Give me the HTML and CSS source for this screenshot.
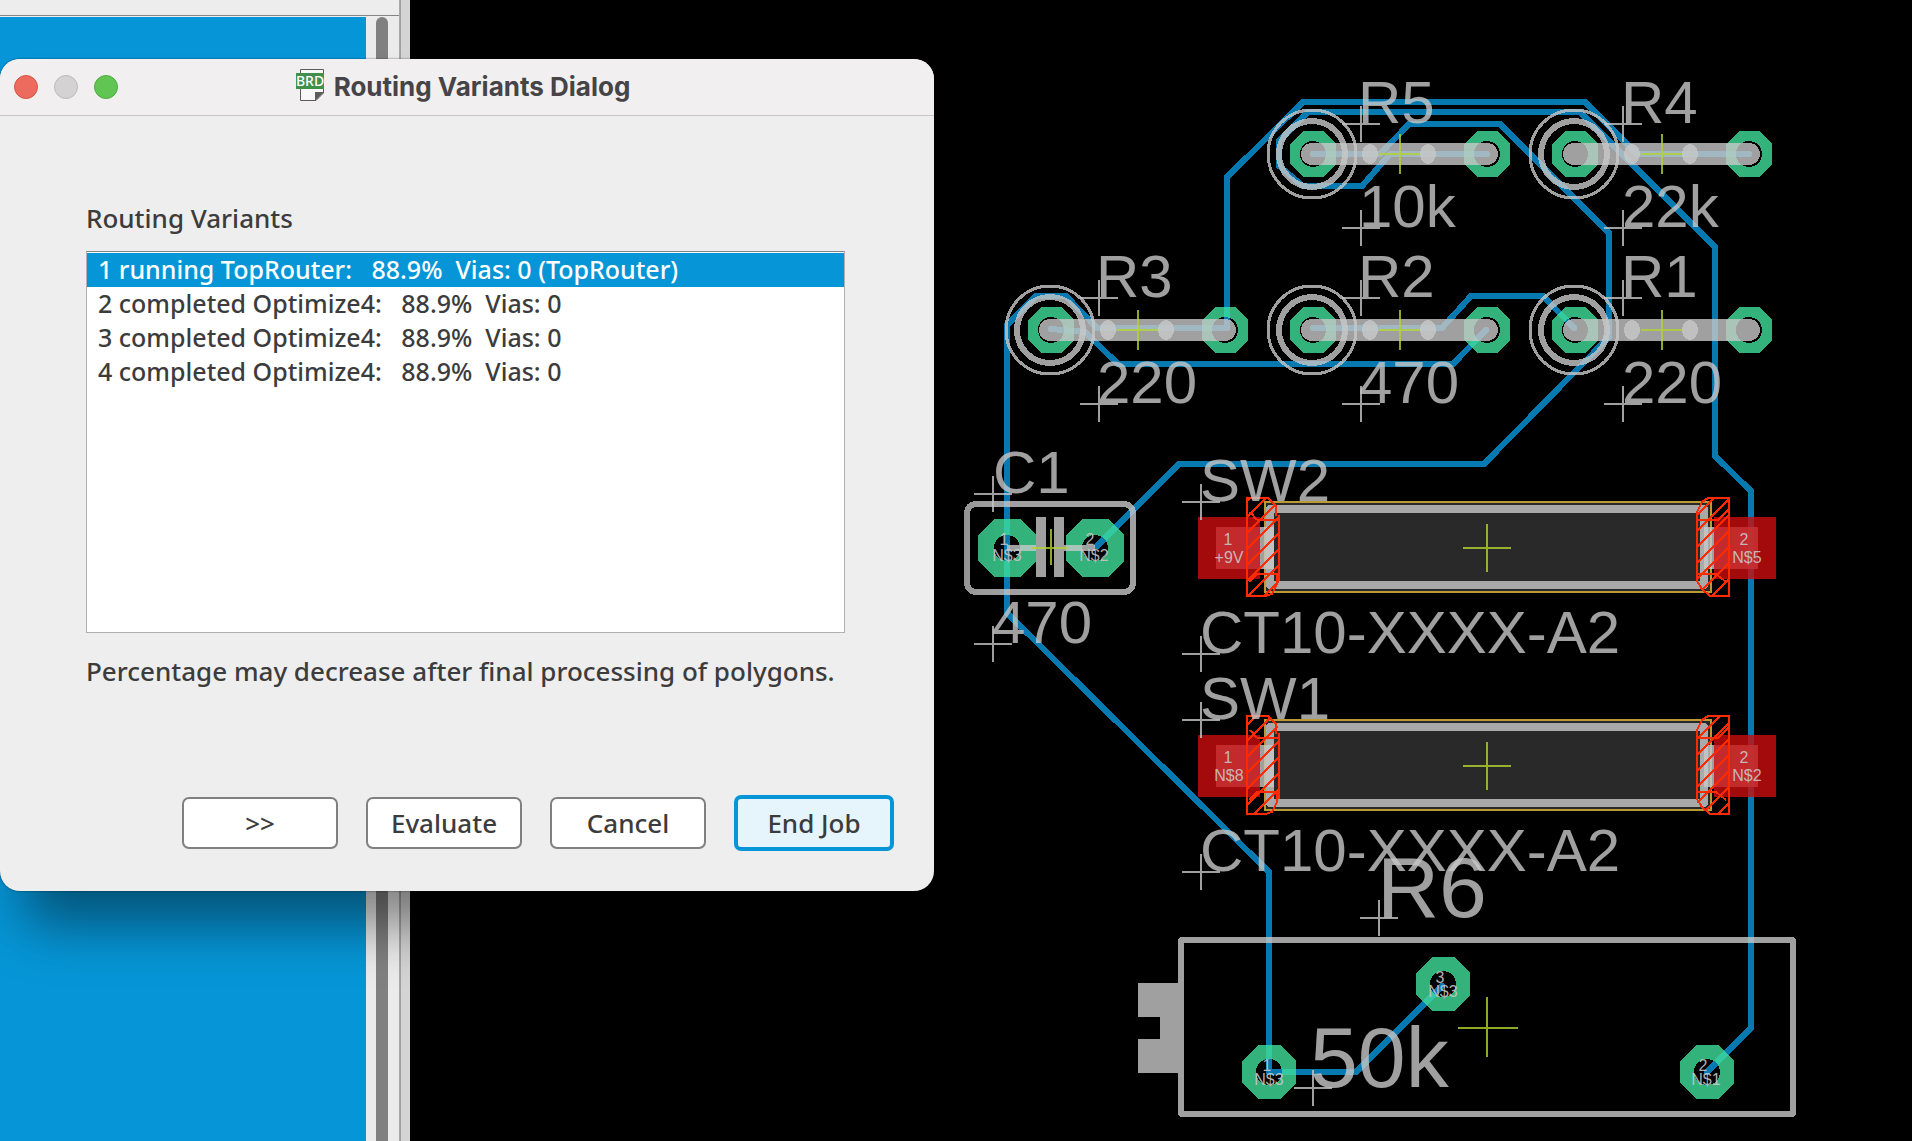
FILE: index.html
```html
<!DOCTYPE html>
<html lang="en">
<head>
<meta charset="utf-8">
<title>Routing Variants Dialog</title>
<link rel="stylesheet" href="styles.css">
</head>
<body>
<main class="workspace">
  <aside class="side">
    <div class="side-window">
      <div class="side-head"></div>
      <div class="side-view">
        <div class="side-selection"></div>
        <div class="track"><div class="thumb"></div></div>
      </div>
    </div>
    <div class="splitter"></div>
  </aside>
  <section class="canvas" aria-label="Board layout">
    <svg class="board" viewBox="410 0 1502 1141" preserveAspectRatio="xMinYMin meet">
      <defs>
        <pattern id="hatch" width="16" height="16" patternUnits="userSpaceOnUse">
          <path class="mask-line" d="M-2 6L6 -2M3 17L17 3"/>
        </pattern>
        <g id="origin"><path d="M-19 0H19M0 -18V18"/></g>
        <path id="pad-s" d="M-10 -23H10L23 -10V10L10 23H-10L-23 10V-10ZM13 0A13 13 0 1 0 -13 0A13 13 0 1 0 13 0Z"/>
        <path id="pad-m" d="M-11 -27H11L27 -11V11L11 27H-11L-27 11V-11ZM13 0A13 13 0 1 0 -13 0A13 13 0 1 0 13 0Z"/>
        <path id="pad-l" d="M-13 -29H13L29 -13V13L13 29H-13L-29 13V-13ZM13 0A13 13 0 1 0 -13 0A13 13 0 1 0 13 0Z"/>
        <g id="resistor">
          <circle class="ring-thin" r="44"/>
          <circle class="ring" r="33"/>
          <path class="lead" d="M0 0H175"/>
          <ellipse class="silk" cx="58" rx="8" ry="10"/>
          <ellipse class="silk" cx="116" rx="8" ry="10"/>
          <path class="center" d="M67 0H108M88 -20V20"/>
        </g>
        <g id="switch">
          <rect class="body" x="1265" y="502" width="446" height="90"/>
          <rect class="frame" x="1270" y="509" width="434" height="76"/>
          <path class="silk" d="M1216 527H1274V569H1216ZM1704 527H1758V569H1704Z"/>
          <path class="smd" d="M1198 517H1260V579H1198ZM1714 517H1776V579H1714Z"/>
          <path class="center" d="M1463 548H1511M1487 524V572"/>
        </g>
        <g id="switch-mask">
          <path class="mask-line" d="M1268 498H1247V596H1265L1272 594L1277 584V574M1268 498L1276 506V516M1279 515V581M1257 520H1279M1256 574H1279M1257 520L1250 512M1257 574L1249 582"/>
          <path class="mask-line" d="M1708 498H1729V596H1710L1702 589L1697 581V512L1702 502L1708 498M1697 520H1718L1728 510M1697 574H1716L1726 582"/>
        </g>
      </defs>

      <g class="traces">
        <path d="M1227 328V177L1303 102H1585L1637 154H1749"/>
        <path d="M1390 154L1362 186H1303L1279 166V141L1308 112H1580L1715 247V456L1751 491V1028L1707 1072"/>
        <path d="M1313 154H1380L1409 124H1500L1609 233V337L1484 464H1179L1097 546"/>
        <path d="M1392 154H1487"/>
        <path d="M1227 328H1097L1066 296H1036L1007 325V613L1269 872V1072H1356L1442 986"/>
        <path d="M1051 329L1085 332L1118 364H1453L1486 330"/>
        <path d="M1313 328H1442L1471 296H1543L1574 328"/>
      </g>

      <g class="pads">
        <use href="#pad-s" x="1313" y="154"/><use href="#pad-s" x="1487" y="154"/>
        <use href="#pad-s" x="1575" y="154"/><use href="#pad-s" x="1749" y="154"/>
        <use href="#pad-s" x="1051" y="330"/><use href="#pad-s" x="1225" y="330"/>
        <use href="#pad-s" x="1313" y="330"/><use href="#pad-s" x="1487" y="330"/>
        <use href="#pad-s" x="1575" y="330"/><use href="#pad-s" x="1749" y="330"/>
        <use href="#pad-l" x="1007" y="548"/><use href="#pad-l" x="1095" y="548"/>
        <use href="#pad-m" x="1269" y="1072"/><use href="#pad-m" x="1443" y="984"/>
        <use href="#pad-m" x="1707" y="1072"/>
      </g>

      <use href="#resistor" x="1312" y="154"/>
      <use href="#resistor" x="1574" y="154"/>
      <use href="#resistor" x="1050" y="330"/>
      <use href="#resistor" x="1312" y="330"/>
      <use href="#resistor" x="1574" y="330"/>

      <!-- capacitor C1 -->
      <rect class="ring" x="967" y="504" width="166" height="88" rx="9"/>
      <path class="silk" d="M1036 517H1046V577H1036ZM1054 517H1064V577H1054ZM1007 545H1036V551H1007ZM1064 545H1095V551H1064Z"/>
      <path class="center" d="M1032 548H1068M1051 529V565"/>

      <use href="#switch"/>
      <use href="#switch" y="218"/>
      <path fill="url(#hatch)" d="M1247 498H1268L1279 510V584L1268 596H1247ZM1729 498H1708L1697 510V584L1708 596H1729Z"/>
      <path fill="url(#hatch)" d="M1247 716H1268L1279 728V802L1268 814H1247ZM1729 716H1708L1697 728V802L1708 814H1729Z"/>
      <use href="#switch-mask"/>
      <use href="#switch-mask" y="218"/>

      <!-- trimmer R6 -->
      <rect class="ring" x="1181" y="940" width="612" height="174" rx="1"/>
      <path class="silk" d="M1138 983H1178V1073H1138V1039H1160V1017H1138Z"/>
      <path class="center" d="M1458 1028H1518M1487 997V1057"/>

      <g class="origins">
        <use href="#origin" x="1361" y="124"/><use href="#origin" x="1361" y="228"/>
        <use href="#origin" x="1623" y="124"/><use href="#origin" x="1623" y="228"/>
        <use href="#origin" x="1099" y="298"/><use href="#origin" x="1099" y="404"/>
        <use href="#origin" x="1361" y="298"/><use href="#origin" x="1361" y="404"/>
        <use href="#origin" x="1623" y="298"/><use href="#origin" x="1623" y="404"/>
        <use href="#origin" x="993" y="494"/><use href="#origin" x="993" y="644"/>
        <use href="#origin" x="1201" y="502"/><use href="#origin" x="1201" y="654"/>
        <use href="#origin" x="1201" y="720"/><use href="#origin" x="1201" y="872"/>
        <use href="#origin" x="1379" y="918"/><use href="#origin" x="1313" y="1088"/>
      </g>

      <g class="names">
        <text x="1358" y="123">R5</text><text x="1359" y="227">10k</text>
        <text x="1621" y="123">R4</text><text x="1622" y="227">22k</text>
        <text x="1096" y="297">R3</text><text x="1097" y="403">220</text>
        <text x="1358" y="297">R2</text><text x="1359" y="403">470</text>
        <text x="1621" y="297">R1</text><text x="1622" y="403">220</text>
        <text x="993" y="493">C1</text><text x="992" y="643">470</text>
        <text x="1200" y="501">SW2</text><text x="1200" y="653">CT10-XXXX-A2</text>
        <text x="1200" y="719">SW1</text><text x="1200" y="871">CT10-XXXX-A2</text>
      </g>
      <g class="names large">
        <text x="1377" y="917">R6</text><text x="1310" y="1087">50k</text>
      </g>
      <g class="nets">
        <text x="1004" y="545">1</text><text x="1007" y="561">N$3</text>
        <text x="1090" y="545">2</text><text x="1094" y="561">N$2</text>
        <text x="1228" y="545">1</text><text x="1229" y="563">+9V</text>
        <text x="1744" y="545">2</text><text x="1747" y="563">N$5</text>
        <text x="1228" y="763">1</text><text x="1229" y="781">N$8</text>
        <text x="1744" y="763">2</text><text x="1747" y="781">N$2</text>
        <text x="1440" y="983">3</text><text x="1443" y="997">N$3</text>
        <text x="1267" y="1071">1</text><text x="1269" y="1085">N$3</text>
        <text x="1703" y="1071">2</text><text x="1706" y="1085">N$1</text>
      </g>
    </svg>
  </section>

  <section class="dialog" role="dialog" aria-labelledby="dialog-title">
    <header class="titlebar">
      <div class="lights">
        <button class="light close" type="button" aria-label="Close"></button>
        <button class="light minimize" type="button" aria-label="Minimize" disabled></button>
        <button class="light maximize" type="button" aria-label="Zoom"></button>
      </div>
      <h1 class="title" id="dialog-title">
        <svg class="doc" width="28" height="32" viewBox="0 0 28 32" aria-hidden="true">
          <path d="M4.500 .5H27.500V24L20 31.500H4.500Z" fill="#f8f8f8" stroke="#5c5c5c"/>
          <path d="M19 32V23H28Z" fill="#5c5c5c"/>
          <rect y="4" width="28" height="16" fill="#41904a"/>
          <text class="doc-label" x="14" y="17">BRD</text>
        </svg>
        <span>Routing Variants Dialog</span>
      </h1>
    </header>
    <div class="content">
      <h2 class="label" id="list-label">Routing Variants</h2>
      <ul class="variants" role="listbox" aria-labelledby="list-label">
        <li class="variant selected" role="option" aria-selected="true">1 running TopRouter:   88.9%  Vias: 0 (TopRouter)</li>
        <li class="variant" role="option">2 completed Optimize4:   88.9%  Vias: 0</li>
        <li class="variant" role="option">3 completed Optimize4:   88.9%  Vias: 0</li>
        <li class="variant" role="option">4 completed Optimize4:   88.9%  Vias: 0</li>
      </ul>
      <p class="label">Percentage may decrease after final processing of polygons.</p>
    </div>
    <footer class="actions">
      <button class="action" type="button">&gt;&gt;</button>
      <button class="action" type="button">Evaluate</button>
      <button class="action" type="button">Cancel</button>
      <button class="action primary" type="button">End Job</button>
    </footer>
  </section>
</main>
</body>
</html>
```
FILE: styles.css
```css
* { box-sizing: border-box; }

body {
  margin: 0;
  background: #000;
  color: #3c3c3c;
  font-family: "Noto Sans", "Open Sans", sans-serif;
}

.workspace {
  position: relative;
  display: flex;
  min-height: 100vh;
  overflow: hidden;
}

/* window behind the dialog */
.side { display: flex; flex: none; width: 410px; background: #ededed; }
.side-window { display: flex; flex-direction: column; flex: 1; border-right: 1px solid #a8a8a8; }
.side-head { height: 15px; }
.side-view { display: flex; flex: 1; border-top: 1px solid #858585; padding-top: 1px; }
.side-selection { flex: 1; background: #0696d7; }
.track { width: 33px; padding: 0 11px 0 10px; background: #ebebeb; display: flex; }
.thumb { flex: 1; border-radius: 6px 6px 0 0; background: #808080; }
.splitter { width: 10px; border-left: 1px solid #a0a0a0; background: #d4d4d4; }

/* board drawing */
.canvas { flex: 1; min-width: 0; }
.board { display: block; width: 100%; height: auto; shape-rendering: crispEdges; }
.traces path { fill: none; stroke: #0579b0; stroke-width: 6; stroke-linejoin: round; stroke-linecap: round; }
.pads { fill: #40de9b; fill-opacity: .8; fill-rule: evenodd; }
.silk { fill: #c8c8c8; fill-opacity: .8; }
.ring, .ring-thin, .lead, .origins { fill: none; stroke: #c8c8c8; stroke-opacity: .8; }
.ring { stroke-width: 6; }
.ring-thin { stroke-width: 3; }
.lead { stroke-width: 22; stroke-linecap: round; }
.origins { stroke-width: 2; }
.center { fill: none; stroke: #b4d232; stroke-opacity: .8; stroke-width: 2; }
.body { fill: #292929; stroke: #b99a35; stroke-width: 2; }
.frame { fill: none; stroke: #a9a9a9; stroke-width: 8; stroke-linejoin: round; }
.smd { fill: #cb0c0e; fill-opacity: .8; }
.mask-line { fill: none; stroke: #ff2a00; stroke-width: 2; }
.names { font: 60px "Liberation Sans", Arial, sans-serif; fill: #c8c8c8; fill-opacity: .8; }
.large { font-size: 86px; }
.nets { font: 16px "Liberation Sans", Arial, sans-serif; fill: #c8c8c8; fill-opacity: .9; text-anchor: middle; }

/* dialog */
.dialog {
  position: absolute;
  top: 59px;
  left: 0;
  display: flex;
  flex-direction: column;
  width: 934px;
  border-radius: 20px;
  background: #eee;
  box-shadow: 0 0 2px rgba(0, 0, 0, .6), 14px 44px 56px -10px rgba(0, 0, 0, .45);
}
.titlebar {
  display: grid;
  grid-template-columns: 1fr auto 1fr;
  align-items: center;
  height: 57px;
  padding: 0 22px 0 14px;
  border-bottom: 1px solid #c8c6c8;
  border-radius: 20px 20px 0 0;
  background: #f1eff0;
}
.lights { display: flex; gap: 16px; }
.light { width: 24px; height: 24px; padding: 0; border: 1px solid; border-radius: 50%; }
.close { background: #ed6a5e; border-color: #d55549; }
.minimize { background: #d4d2d3; border-color: #bcbabb; }
.maximize { background: #61c554; border-color: #50aa43; }
.title {
  display: flex;
  align-items: center;
  gap: 10px;
  margin: 0;
  color: #464446;
  font: bold 26px/32px Inter, sans-serif;
}
.doc { margin-bottom: 4px; }
.doc-label { fill: #fff; font: 500 14px "Noto Sans", sans-serif; text-anchor: middle; }
.content { padding: 82px 89px 0 86px; }
.label { margin: 0; font-size: 26px; font-weight: 500; line-height: 40px; white-space: nowrap; }
.variants {
  height: 382px;
  margin: 13px 0 18px;
  padding: 1px 0;
  border: 1px solid #b0b0b0;
  border-top-color: #858585;
  background: #fff;
  list-style: none;
}
.variant { height: 34px; padding: 0 11px; font-size: 25px; font-weight: 500; line-height: 32px; white-space: pre; }
.selected { background: #0696d7; color: #fff; }
.actions { display: flex; justify-content: flex-end; align-items: center; gap: 28px; padding: 104px 40px 40px; }
.action {
  width: 156px;
  height: 52px;
  padding: 0;
  border: 2px solid #808080;
  border-radius: 7px;
  background: #fff;
  color: #3c3c3c;
  font: 500 26px "Noto Sans", "Open Sans", sans-serif;
}
.primary { width: 160px; height: 56px; border: 4px solid #0696d7; background: #e6f4fc; }
```
